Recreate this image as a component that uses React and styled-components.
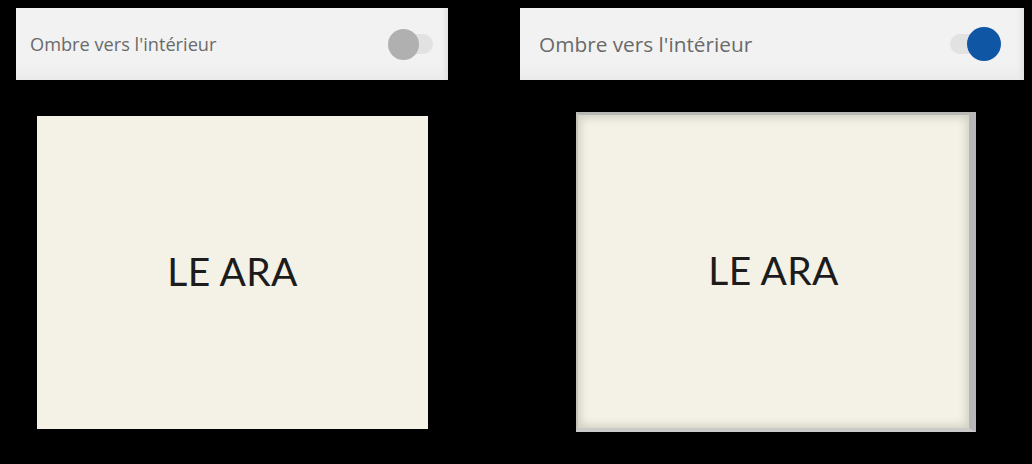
import React from "react";
import styled, { createGlobalStyle } from "styled-components";

const Global = createGlobalStyle`
  html, body { margin: 0; padding: 0; background: #000; }
  body { width: 1032px; height: 464px; overflow: hidden; }
`;

const Page = styled.div`
  display: grid;
  grid-template-columns: 432px 504px;
  column-gap: 72px;
  padding: 8px 8px 0 16px;
`;

const Column = styled.div`
  display: flex;
  flex-direction: column;
  align-items: center;
`;

const Bar = styled.div`
  align-self: stretch;
  height: 72px;
  box-sizing: border-box;
  display: flex;
  align-items: center;
  justify-content: space-between;
  padding: 0 ${p => p.$padRight}px 0 ${p => p.$padLeft}px;
  background: linear-gradient(#f2f2f2 0%, #f2f2f2 78%, #ebebeb 100%);
  box-shadow: inset -6px 0 4px -3px #e0e0e0;
`;

const Label = styled.span`
  font-family: "Open Sans", "Noto Sans", sans-serif;
  font-size: ${p => p.$size}px;
  color: #6a6a6a;
  margin-top: -1px;
`;

const Track = styled.div`
  position: relative;
  width: ${p => p.$w}px;
  height: 20px;
  border-radius: 10px;
  background: #e2e2e2;
`;

const Knob = styled.div`
  position: absolute;
  top: 50%;
  ${p => (p.$on ? "right: -1px;" : "left: -1px;")}
  width: ${p => p.$size}px;
  height: ${p => p.$size}px;
  margin-top: -${p => p.$size / 2}px;
  border-radius: 50%;
  background: ${p => (p.$on ? "#0f56a5" : "#b0b0b0")};
`;

const Card = styled.div`
  box-sizing: border-box;
  width: ${p => p.$w}px;
  height: ${p => p.$h}px;
  margin-top: ${p => p.$top}px;
  margin-left: ${p => p.$shift}px;
  background: #f4f2e7;
  display: flex;
  align-items: center;
  justify-content: center;
  ${p =>
    p.$inset &&
    `
    border-top: 3px solid #b9b9b3;
    border-left: 2px solid #c3c3bc;
    border-right: 7px solid #b7b6b8;
    border-bottom: 4px solid #cacac8;
    box-shadow: inset 0 0 8px 3px #d2d1c2;
  `}
`;

const Title = styled.span`
  font-family: Lato, "Open Sans", sans-serif;
  font-size: 39px;
  color: #1c1c1c;
  letter-spacing: 0.3px;
  margin-top: -3px;
`;

function Panel({ on }) {
  return (
    <Column>
      <Bar $padRight={on ? 24 : 15} $padLeft={on ? 19 : 14}>
        <Label $size={on ? 20.8 : 18.2}>Ombre vers l'intérieur</Label>
        <Track $w={on ? 50 : 44}>
          <Knob $on={on} $size={on ? 34 : 31} />
        </Track>
      </Bar>
      <Card
        $inset={on}
        $w={on ? 400 : 391}
        $h={on ? 320 : 313}
        $top={on ? 32 : 36}
        $shift={on ? 8 : 1}
      >
        <Title>LE ARA</Title>
      </Card>
    </Column>
  );
}

export default function App() {
  return (
    <>
      <Global />
      <Page>
        <Panel on={false} />
        <Panel on />
      </Page>
    </>
  );
}
